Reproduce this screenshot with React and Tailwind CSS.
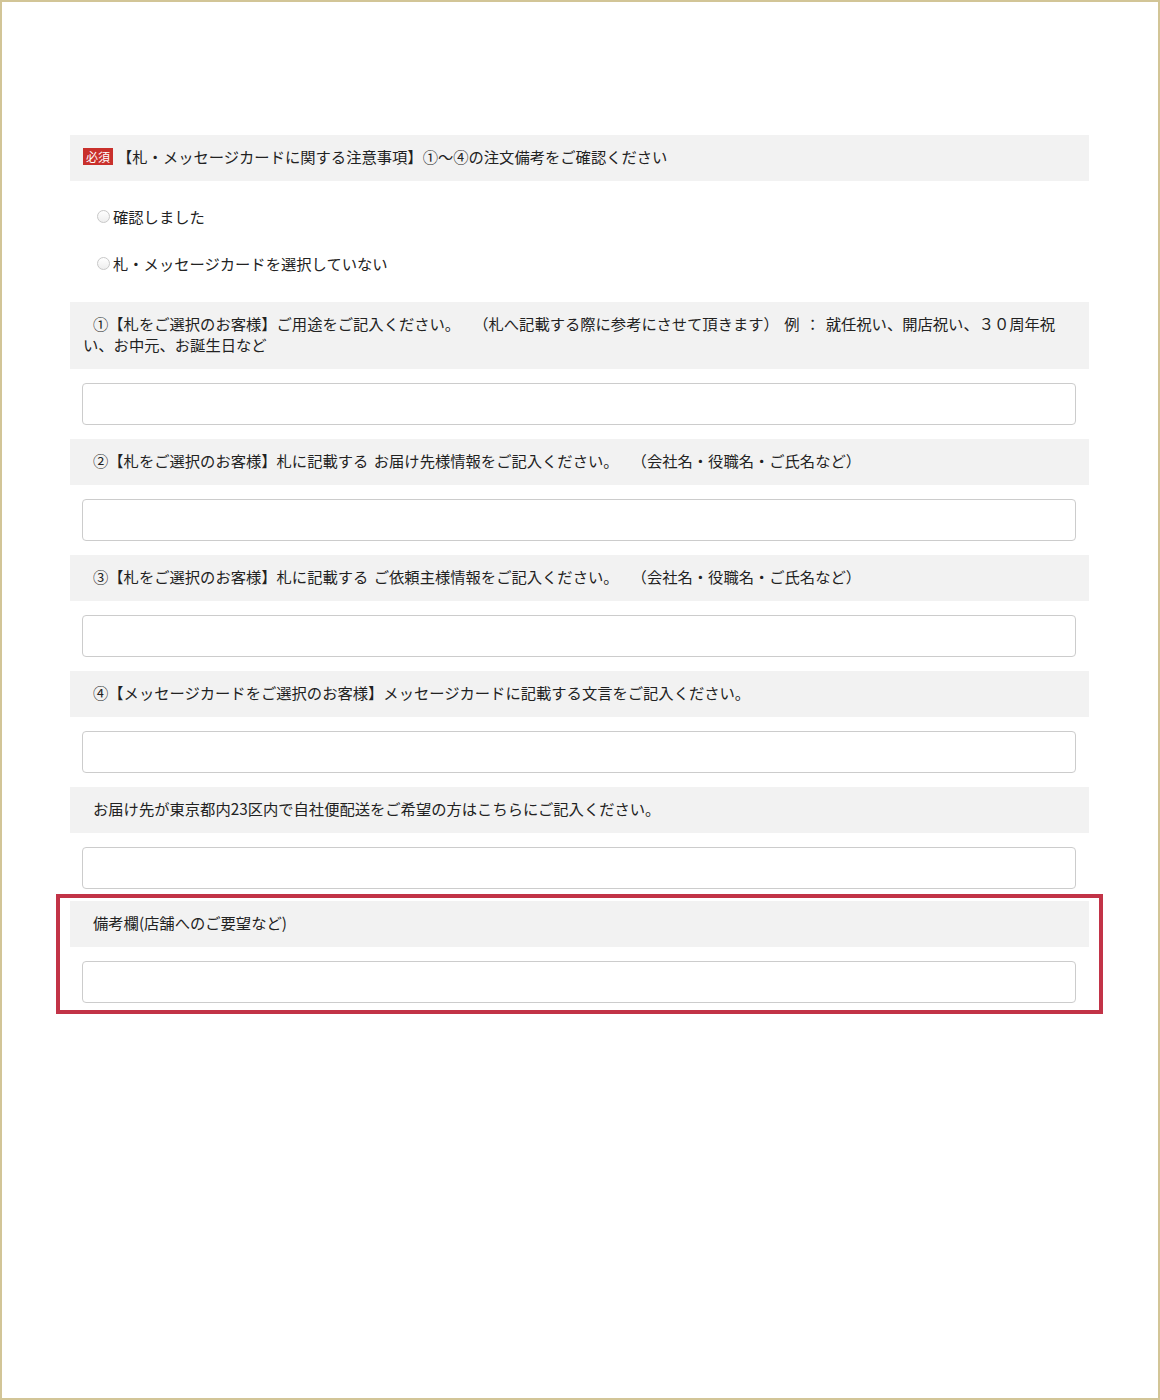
import React from 'react';

const fields = [
  {
    id: 'usage',
    label:
      '①【札をご選択のお客様】ご用途をご記入ください。　 （札へ記載する際に参考にさせて頂きます） 例 ： 就任祝い、開店祝い、３０周年祝い、お中元、お誕生日など',
  },
  {
    id: 'to',
    label: '②【札をご選択のお客様】札に記載する お届け先様情報をご記入ください。　 （会社名・役職名・ご氏名など）',
  },
  {
    id: 'from',
    label: '③【札をご選択のお客様】札に記載する ご依頼主様情報をご記入ください。　 （会社名・役職名・ご氏名など）',
  },
  {
    id: 'message',
    label: '④【メッセージカードをご選択のお客様】メッセージカードに記載する文言をご記入ください。',
  },
  {
    id: 'tokyo',
    label: 'お届け先が東京都内23区内で自社便配送をご希望の方はこちらにご記入ください。',
  },
];

function Label({ children }) {
  return (
    <div className="bg-[#f2f2f2] pl-[13px] pr-[20px] pt-[11px] pb-[14px] indent-[10px] text-[15.3px] leading-[21px] text-[#222222] [word-spacing:2px]">
      {children}
    </div>
  );
}

function TextField({ name }) {
  return (
    <input
      type="text"
      name={name}
      className="mx-[12px] mt-[14px] block h-[42px] w-[994px] rounded-[4px] border border-[#cccccc] bg-white"
    />
  );
}

function Radio({ name, children }) {
  return (
    <label className="flex items-center text-[15.3px] leading-[21px] text-[#222222]">
      <span className="ml-[27px] mr-[3px] inline-block h-[13px] w-[13px] rounded-full border border-[#c8c8c8] bg-gradient-to-b from-white to-[#eeeeee]" />
      <input type="radio" name={name} className="hidden" />
      {children}
    </label>
  );
}

export default function App() {
  return (
    <div className="h-[1400px] border-2 border-[#d2c597] bg-white font-['Noto_Sans_CJK_JP','Liberation_Sans',sans-serif]">
      <div className="ml-[68px] w-[1019px] pt-[133px]">
        <div className="flex items-center bg-[#f2f2f2] px-[13px] pt-[11px] pb-[14px] text-[15.3px] leading-[21px] text-[#222222]">
          <span className="mr-[4px] flex h-[17px] w-[30px] items-center justify-center bg-[#c9302c] text-[12px] leading-none text-white">
            必須
          </span>
          <span>【札・メッセージカードに関する注意事項】①〜④の注文備考をご確認ください</span>
        </div>

        <div className="flex flex-col gap-[26px] pt-[25px] pb-[28px]">
          <Radio name="notice">確認しました</Radio>
          <Radio name="notice">札・メッセージカードを選択していない</Radio>
        </div>

        {fields.map((f, i) => (
          <div key={f.id} className={i === 0 ? '' : 'mt-[14px]'}>
            <Label>{f.label}</Label>
            <TextField name={f.id} />
          </div>
        ))}

        <div className="-mx-[14px] mt-[5px] border-4 border-[#c23347] px-[10px] pt-[3px] pb-[7px]">
          <Label>備考欄(店舗へのご要望など)</Label>
          <TextField name="remarks" />
        </div>
      </div>
    </div>
  );
}
